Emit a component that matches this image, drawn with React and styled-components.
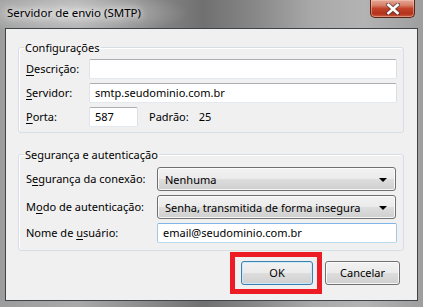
import React from "react";
import styled, { createGlobalStyle } from "styled-components";

const GlobalStyle = createGlobalStyle`
  html, body { margin: 0; padding: 0; }
  body {
    font-family: "Noto Sans", "Open Sans", sans-serif;
    font-size: 11px;
    color: #000;
  }
  * { box-sizing: border-box; }
`;

const Window = styled.div`
  width: 423px;
  height: 307px;
  display: flex;
  flex-direction: column;
  overflow: hidden;
  background:
    radial-gradient(ellipse 120px 22px at 70px 13px, rgba(255,255,255,0.45), rgba(255,255,255,0) 100%),
    linear-gradient(90deg, #9c9c9c 0%, #a9a9a9 18%, #8c8c8c 34%, #707070 48%, #878787 60%, #a9a9a9 74%, #b3b3b3 86%, #9e9e9e 100%);
`;

const TitleBar = styled.div`
  height: 28px;
  flex: none;
  display: flex;
  justify-content: space-between;
  align-items: flex-start;
  padding-left: 7px;
`;

const Title = styled.div`
  margin-top: 5px;
  font-size: 11.5px;
  line-height: 16px;
  text-shadow: 0 0 6px rgba(255,255,255,0.9), 0 0 10px rgba(255,255,255,0.7);
`;

const CloseButton = styled.div`
  width: 45px;
  height: 18px;
  margin-right: 8px;
  border: 1px solid #5a2317;
  border-top: none;
  border-radius: 0 0 5px 5px;
  background: linear-gradient(180deg, #e3a796 0%, #d9826c 30%, #c2432a 50%, #b4321c 80%, #c85a3e 100%);
  box-shadow: inset 0 0 0 1px rgba(255,210,190,0.45);
  display: flex;
  align-items: center;
  justify-content: center;
`;

const Client = styled.div`
  flex: 1;
  margin: 0 5px 6px;
  background: #f0f0f0;
  border: 1px solid #3f4448;
  display: flex;
  flex-direction: column;
  padding: 11px 13px 0 12px;
`;

const Group = styled.fieldset`
  margin: 0 0 14px;
  padding: 0 6px ${(p) => p.$pb}px 7px;
  border: 1px solid #d5dfe5;
  border-radius: 3px;
  box-shadow: inset 1px 1px 0 #fff;
  min-width: 0;
`;

const Legend = styled.legend`
  padding: 0 1px;
  margin-left: -2px;
  line-height: 15px;
`;

const Form = styled.div`
  display: grid;
  grid-template-columns: ${(p) => p.$labelWidth}px 1fr;
  row-gap: 4px;
  margin-top: ${(p) => p.$mt}px;
  align-items: center;
`;

const Label = styled.div`
  white-space: nowrap;
  line-height: 16px;
`;

const Key = styled.span`
  text-decoration: underline;
  text-underline-offset: 2px;
`;

const TextBox = styled.div`
  height: 20px;
  width: ${(p) => (p.$w ? `${p.$w}px` : "auto")};
  background: #fff;
  border: 1px solid;
  border-color: ${(p) =>
    p.$focus ? "#7eb4ea #a4c9e3 #b7d9ed #a4c9e3" : "#abadb3 #dbdfe6 #e3e9ef #e2e3ea"};
  border-radius: 2px;
  padding: 0 5px;
  line-height: 18px;
  white-space: nowrap;
  overflow: hidden;
`;

const InlineRow = styled.div`
  display: flex;
  align-items: center;
  line-height: 16px;
`;

const Aside = styled.span`
  margin-left: ${(p) => p.$ml}px;
`;

const Select = styled.div`
  height: 24px;
  border: 1px solid #707070;
  border-radius: 3px;
  background: linear-gradient(180deg, #f2f2f2 0%, #ebebeb 48%, #dddddd 52%, #cfcfcf 100%);
  box-shadow: inset 0 0 0 1px rgba(255,255,255,0.8);
  display: flex;
  align-items: center;
  justify-content: space-between;
  padding: 0 8px 0 7px;
  white-space: nowrap;
  margin-right: 1px;
`;

const Arrow = styled.span`
  width: 0;
  height: 0;
  border-left: 4px solid transparent;
  border-right: 4px solid transparent;
  border-top: 4px solid #000;
  margin-top: 1px;
`;

const ButtonBar = styled.div`
  display: flex;
  justify-content: flex-end;
  gap: 12px;
  margin-top: -4px;
  padding-right: 4px;
`;

const Button = styled.div`
  position: relative;
  width: ${(p) => p.$w}px;
  height: 24px;
  border: 1px solid ${(p) => (p.$default ? "#3c7fb1" : "#707070")};
  border-radius: 3px;
  background: linear-gradient(180deg, #f2f2f2 0%, #ebebeb 48%, #dddddd 52%, #cfcfcf 100%);
  box-shadow: inset 0 0 0 1px ${(p) => (p.$default ? "rgba(200,235,255,0.9)" : "rgba(255,255,255,0.8)")};
  display: flex;
  align-items: center;
  justify-content: center;
  line-height: 16px;
`;

const Highlight = styled.span`
  position: absolute;
  left: -12px;
  right: -10px;
  top: -10px;
  bottom: -10px;
  border: 5px solid #ed1c24;
  pointer-events: none;
`;

export default function App() {
  return (
    <>
      <GlobalStyle />
      <Window>
        <TitleBar>
          <Title>Servidor de envio (SMTP)</Title>
          <CloseButton>
            <svg width="14" height="12" viewBox="0 0 14 12">
              <path
                d="M2 1.5 L12 10.5 M12 1.5 L2 10.5"
                stroke="#3a3a3a"
                strokeWidth="4.6"
                strokeLinecap="square"
                opacity="0.55"
              />
              <path
                d="M2.5 2 L11.5 10 M11.5 2 L2.5 10"
                stroke="#ffffff"
                strokeWidth="2.6"
                strokeLinecap="square"
              />
            </svg>
          </CloseButton>
        </TitleBar>
        <Client>
          <Group $pb={5}>
            <Legend>Configurações</Legend>
            <Form $labelWidth={63} $mt={4}>
              <Label>
                <Key>D</Key>escrição:
              </Label>
              <TextBox />
              <Label>
                <Key>S</Key>ervidor:
              </Label>
              <TextBox>smtp.seudominio.com.br</TextBox>
              <Label>
                <Key>P</Key>orta:
              </Label>
              <InlineRow>
                <TextBox $w={49}>587</TextBox>
                <Aside $ml={11}>Padrão:</Aside>
                <Aside $ml={10}>25</Aside>
              </InlineRow>
            </Form>
          </Group>
          <Group $pb={7}>
            <Legend>Segurança e autenticação</Legend>
            <Form $labelWidth={131} $mt={5}>
              <Label>
                S<Key>e</Key>gurança da conexão:
              </Label>
              <Select>
                <span>Nenhuma</span>
                <Arrow />
              </Select>
              <Label>
                M<Key>o</Key>do de autenticação:
              </Label>
              <Select>
                <span>Senha, transmitida de forma insegura</span>
                <Arrow />
              </Select>
              <Label>
                Nome de <Key>u</Key>suário:
              </Label>
              <TextBox $focus>email@seudominio.com.br</TextBox>
            </Form>
          </Group>
          <ButtonBar>
            <Button $w={72} $default>
              OK
              <Highlight />
            </Button>
            <Button $w={75}>Cancelar</Button>
          </ButtonBar>
        </Client>
      </Window>
    </>
  );
}
